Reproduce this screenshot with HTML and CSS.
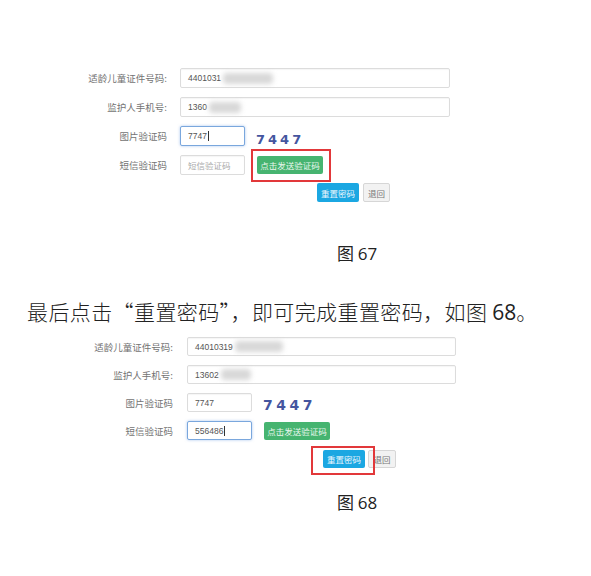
FILE: index.html
```html
<!DOCTYPE html>
<html lang="zh">
<head>
<meta charset="utf-8">
<title>重置密码</title>
<link rel="stylesheet" href="styles.css">
</head>
<body>
<div class="page">
  <section class="shot shot1">
    <div class="form">
      <div class="lbl">适龄儿童证件号码:</div>
      <div class="field wide"><span class="val">4401031</span><span class="mask m1"></span></div>
      <div class="lbl">监护人手机号:</div>
      <div class="field wide"><span class="val">1360</span><span class="mask m2"></span></div>
      <div class="lbl">图片验证码</div>
      <div class="inline">
        <div class="field short focus"><span class="val">7747</span><span class="caret"></span></div>
        <span class="captcha">7447</span>
      </div>
      <div class="lbl">短信验证码</div>
      <div class="inline">
        <div class="field short"><span class="ph">短信验证码</span></div>
        <span class="btn green">点击发送验证码<span class="redbox rb1"></span></span>
      </div>
      <div></div>
      <div class="actions a1">
        <span class="btn blue">重置密码</span>
        <span class="btn gray">退回</span>
      </div>
    </div>
  </section>

  <p class="caption cap1">图 <span class="num">67</span></p>

  <p class="para">最后点击“重置密码”，即可完成重置密码，如图 <span class="num">68</span>。</p>

  <section class="shot shot2">
    <div class="form">
      <div class="lbl">适龄儿童证件号码:</div>
      <div class="field wide"><span class="val">44010319</span><span class="mask m3"></span></div>
      <div class="lbl">监护人手机号:</div>
      <div class="field wide"><span class="val">13602</span><span class="mask m4"></span></div>
      <div class="lbl">图片验证码</div>
      <div class="inline">
        <div class="field short"><span class="val">7747</span></div>
        <span class="captcha">7447</span>
      </div>
      <div class="lbl">短信验证码</div>
      <div class="inline">
        <div class="field short focus"><span class="val">556486</span><span class="caret"></span></div>
        <span class="btn green">点击发送验证码</span>
      </div>
      <div></div>
      <div class="actions a2">
        <span class="btn blue">重置密码<span class="redbox rb2"></span></span>
        <span class="btn gray">退回</span>
      </div>
    </div>
  </section>

  <p class="caption cap2">图 <span class="num">68</span></p>
</div>
</body>
</html>
```

FILE: styles.css
```css
html, body {
  margin: 0;
  padding: 0;
  background: #ffffff;
}

.page {
  width: 591px;
  height: 576px;
  overflow: hidden;
  font-family: "Noto Sans CJK SC", "Noto Sans", sans-serif;
  color: #222;
}

.shot {
  position: relative;
}

.shot1 {
  padding-top: 68px;
}

.shot2 {
  padding-top: 0;
  margin-top: 11px;
}

.form {
  display: grid;
  align-items: center;
}

.shot1 .form {
  grid-template-columns: 110px 270px;
  column-gap: 13px;
  row-gap: 9px;
  margin-left: 57px;
}

.shot2 .form {
  grid-template-columns: 110px 269px;
  column-gap: 14px;
  row-gap: 9px;
  margin-left: 63px;
}

.lbl {
  text-align: right;
  font-size: 9.5px;
  line-height: 12px;
  color: #737373;
  white-space: nowrap;
  align-self: center;
}

.field {
  position: relative;
  box-sizing: border-box;
  height: 20px;
  border: 1px solid #dcdcdc;
  border-radius: 2px;
  background: #fff;
  display: flex;
  align-items: center;
  padding-left: 7px;
  font-family: "Liberation Sans", "Noto Sans CJK SC", sans-serif;
  font-size: 8.5px;
  color: #555;
  box-shadow: inset 0 1px 1px rgba(0,0,0,0.04);
}

.shot2 .field {
  height: 19px;
}

.field.wide {
  width: 100%;
}

.field.short {
  width: 65px;
  flex: none;
}

.field.focus {
  border-color: #7aa7dd;
  box-shadow: 0 0 3px rgba(102,150,220,0.55);
}

.caret {
  display: inline-block;
  width: 1px;
  height: 10px;
  background: #333;
  margin-left: 1px;
}

.ph {
  font-family: "Noto Sans CJK SC", sans-serif;
  font-size: 8.5px;
  color: #aaa;
}

.mask {
  display: inline-block;
  height: 11px;
  background: #d8d8d8;
  filter: blur(2.5px);
  border-radius: 4px;
}

.m1 { width: 50px; margin-left: 2px; }
.m2 { width: 32px; margin-left: 2px; }
.m3 { width: 48px; margin-left: 2px; }
.m4 { width: 30px; margin-left: 2px; }

.inline {
  display: flex;
  align-items: center;
  gap: 11px;
}

.captcha {
  align-self: flex-end;
  font-family: "DejaVu Sans", sans-serif;
  font-weight: bold;
  font-size: 13px;
  line-height: 13px;
  letter-spacing: 3px;
  color: #44559f;
}

.shot2 .captcha {
  font-size: 14px;
  letter-spacing: 3.5px;
}

.btn {
  position: relative;
  box-sizing: border-box;
  display: inline-flex;
  align-items: center;
  justify-content: center;
  height: 18px;
  border-radius: 2px;
  font-family: "Noto Sans CJK SC", sans-serif;
  font-size: 8.5px;
  white-space: nowrap;
}

.btn.green {
  width: 66px;
  background: #46b470;
  color: #eaf7ee;
  margin-left: 1px;
}

.btn.blue {
  width: 42px;
  height: 19px;
  background: #1ba7e2;
  color: #eaf6fd;
}

.btn.gray {
  width: 27px;
  height: 19px;
  background: #f2f2f2;
  border: 1px solid #d6d6d6;
  color: #777;
}

.shot2 .btn.blue,
.shot2 .btn.gray {
  height: 18px;
}

.actions {
  display: flex;
  gap: 4px;
}

.a1 {
  padding-left: 137px;
  margin-top: -1px;
}

.a2 {
  padding-left: 136px;
  margin-top: 1px;
}

.shot2 .btn.gray {
  width: 28px;
  margin-left: -1px;
}

.redbox {
  position: absolute;
  box-sizing: border-box;
  border: 2px solid #e2383a;
  pointer-events: none;
  z-index: 2;
}

.rb1 {
  left: -6px;
  right: -8px;
  top: -7px;
  bottom: -8px;
}

.rb2 {
  left: -12px;
  right: -10px;
  top: -4px;
  bottom: -7px;
}

.caption {
  margin: 0;
  padding-left: 337px;
  font-size: 17px;
  line-height: 24px;
  color: #222;
}

.cap1 {
  margin-top: 39px;
}

.cap2 {
  margin-top: 22px;
}

.num {
  font-family: "Open Sans", "Liberation Sans", sans-serif;
  font-weight: 400;
  letter-spacing: 0;
}

.para {
  margin: 31px 0 0 0;
  padding-left: 27px;
  font-size: 21px;
  line-height: 28px;
  font-weight: 300;
  letter-spacing: 0.4px;
  color: #222;
  white-space: nowrap;
}
```
